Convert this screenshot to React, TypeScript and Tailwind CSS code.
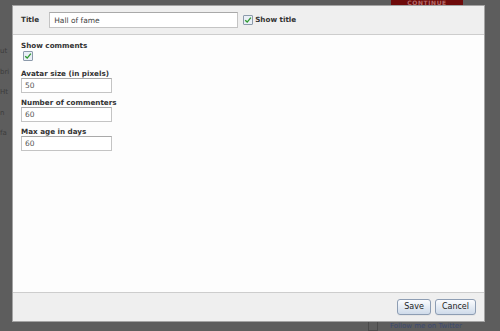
import React from "react";

const font = { fontFamily: '"DejaVu Sans", Verdana, sans-serif' };

const Check = ({ className = "" }: { className?: string }) => (
  <span
    className={`inline-flex h-[10px] w-[10px] shrink-0 items-center justify-center rounded-[1px] border border-[#8c9aab] bg-[#e9eff6] ${className}`}
  >
    <svg viewBox="0 0 10 10" className="h-[8px] w-[8px]">
      <path d="M1.5 5.2 L4 7.6 L8.6 2" fill="none" stroke="#2f9a2f" strokeWidth="1.7" />
    </svg>
  </span>
);

const Field = ({ label, value }: { label: string; value: string }) => (
  <div className="flex flex-col">
    <label className="h-[9px] text-[7.2px] font-bold leading-[9px] text-[#333]">{label}</label>
    <input
      readOnly
      value={value}
      className="h-[15px] w-[91px] border border-[#c4c4c4] border-t-[#a9a9a9] bg-white px-[3px] text-[7.5px] text-[#555] outline-none"
    />
  </div>
);

const Button = ({ children }: { children: React.ReactNode }) => (
  <button className="h-[16px] rounded-[3px] border border-[#8d9db3] bg-gradient-to-b from-[#fbfcfe] to-[#cfdbea] px-[6px] text-[8px] leading-none text-[#222] shadow-[0_1px_0_#e6e6e6]">
    {children}
  </button>
);

export default function App() {
  return (
    <div style={font} className="relative h-[331px] w-[500px] overflow-hidden bg-[#5d5d5d]">
      {/* dimmed page behind the dialog */}
      <div className="flex h-full flex-col">
        <div className="flex h-[6px]">
          <div className="ml-[391px] flex h-[6px] w-[72px] items-end justify-center bg-[#6e0a0a] text-[6px] font-bold leading-none tracking-widest text-[#b36a6a]">
            CONTINUE
          </div>
        </div>
        <div className="flex flex-1 flex-col gap-[10px] pt-[40px] text-[7px] text-[#3c3c3c]">
          <span>ut</span>
          <span>bri</span>
          <span>Ht</span>
          <span>n</span>
          <span>fa</span>
        </div>
        <div className="flex h-[10px] items-center">
          <span className="ml-[368px] h-[10px] w-[10px] border border-[#4a4a4a]" />
          <span className="ml-[12px] text-[7px] leading-none text-[#3a4870]">Follow me on Twitter</span>
        </div>
      </div>

      {/* dialog */}
      <div className="absolute left-[12px] top-[5px] flex h-[317px] w-[473px] flex-col border border-[#a3a3a3] bg-[#fdfdfd]">
        <div className="flex h-[29px] shrink-0 items-center border-b border-[#cdcdcd] bg-[#efefef] pl-[8px]">
          <span className="text-[7.2px] font-bold text-[#333]">Title</span>
          <input
            readOnly
            value="Hall of fame"
            className="ml-[10px] h-[16px] w-[189px] border border-[#c4c4c4] border-t-[#a9a9a9] bg-white px-[4px] text-[7.5px] text-[#444] outline-none"
          />
          <Check className="ml-[5px]" />
          <span className="ml-[2px] text-[7.2px] font-bold text-[#333]">Show title</span>
        </div>

        <div className="flex flex-1 flex-col gap-[6px] px-[8px] pt-[6px]">
          <div className="flex flex-col">
            <span className="h-[10px] text-[7.2px] font-bold leading-[9px] text-[#333]">Show comments</span>
            <Check className="ml-[2px]" />
          </div>
          <div className="mt-[2px] flex flex-col gap-[5px]">
            <Field label="Avatar size (in pixels)" value="50" />
            <Field label="Number of commenters" value="60" />
            <Field label="Max age in days" value="60" />
          </div>
        </div>

        <div className="flex h-[29px] shrink-0 items-center justify-end gap-[4px] border-t border-[#cdcdcd] bg-[#efefef] pr-[8px]">
          <Button>Save</Button>
          <Button>Cancel</Button>
        </div>
      </div>
    </div>
  );
}
